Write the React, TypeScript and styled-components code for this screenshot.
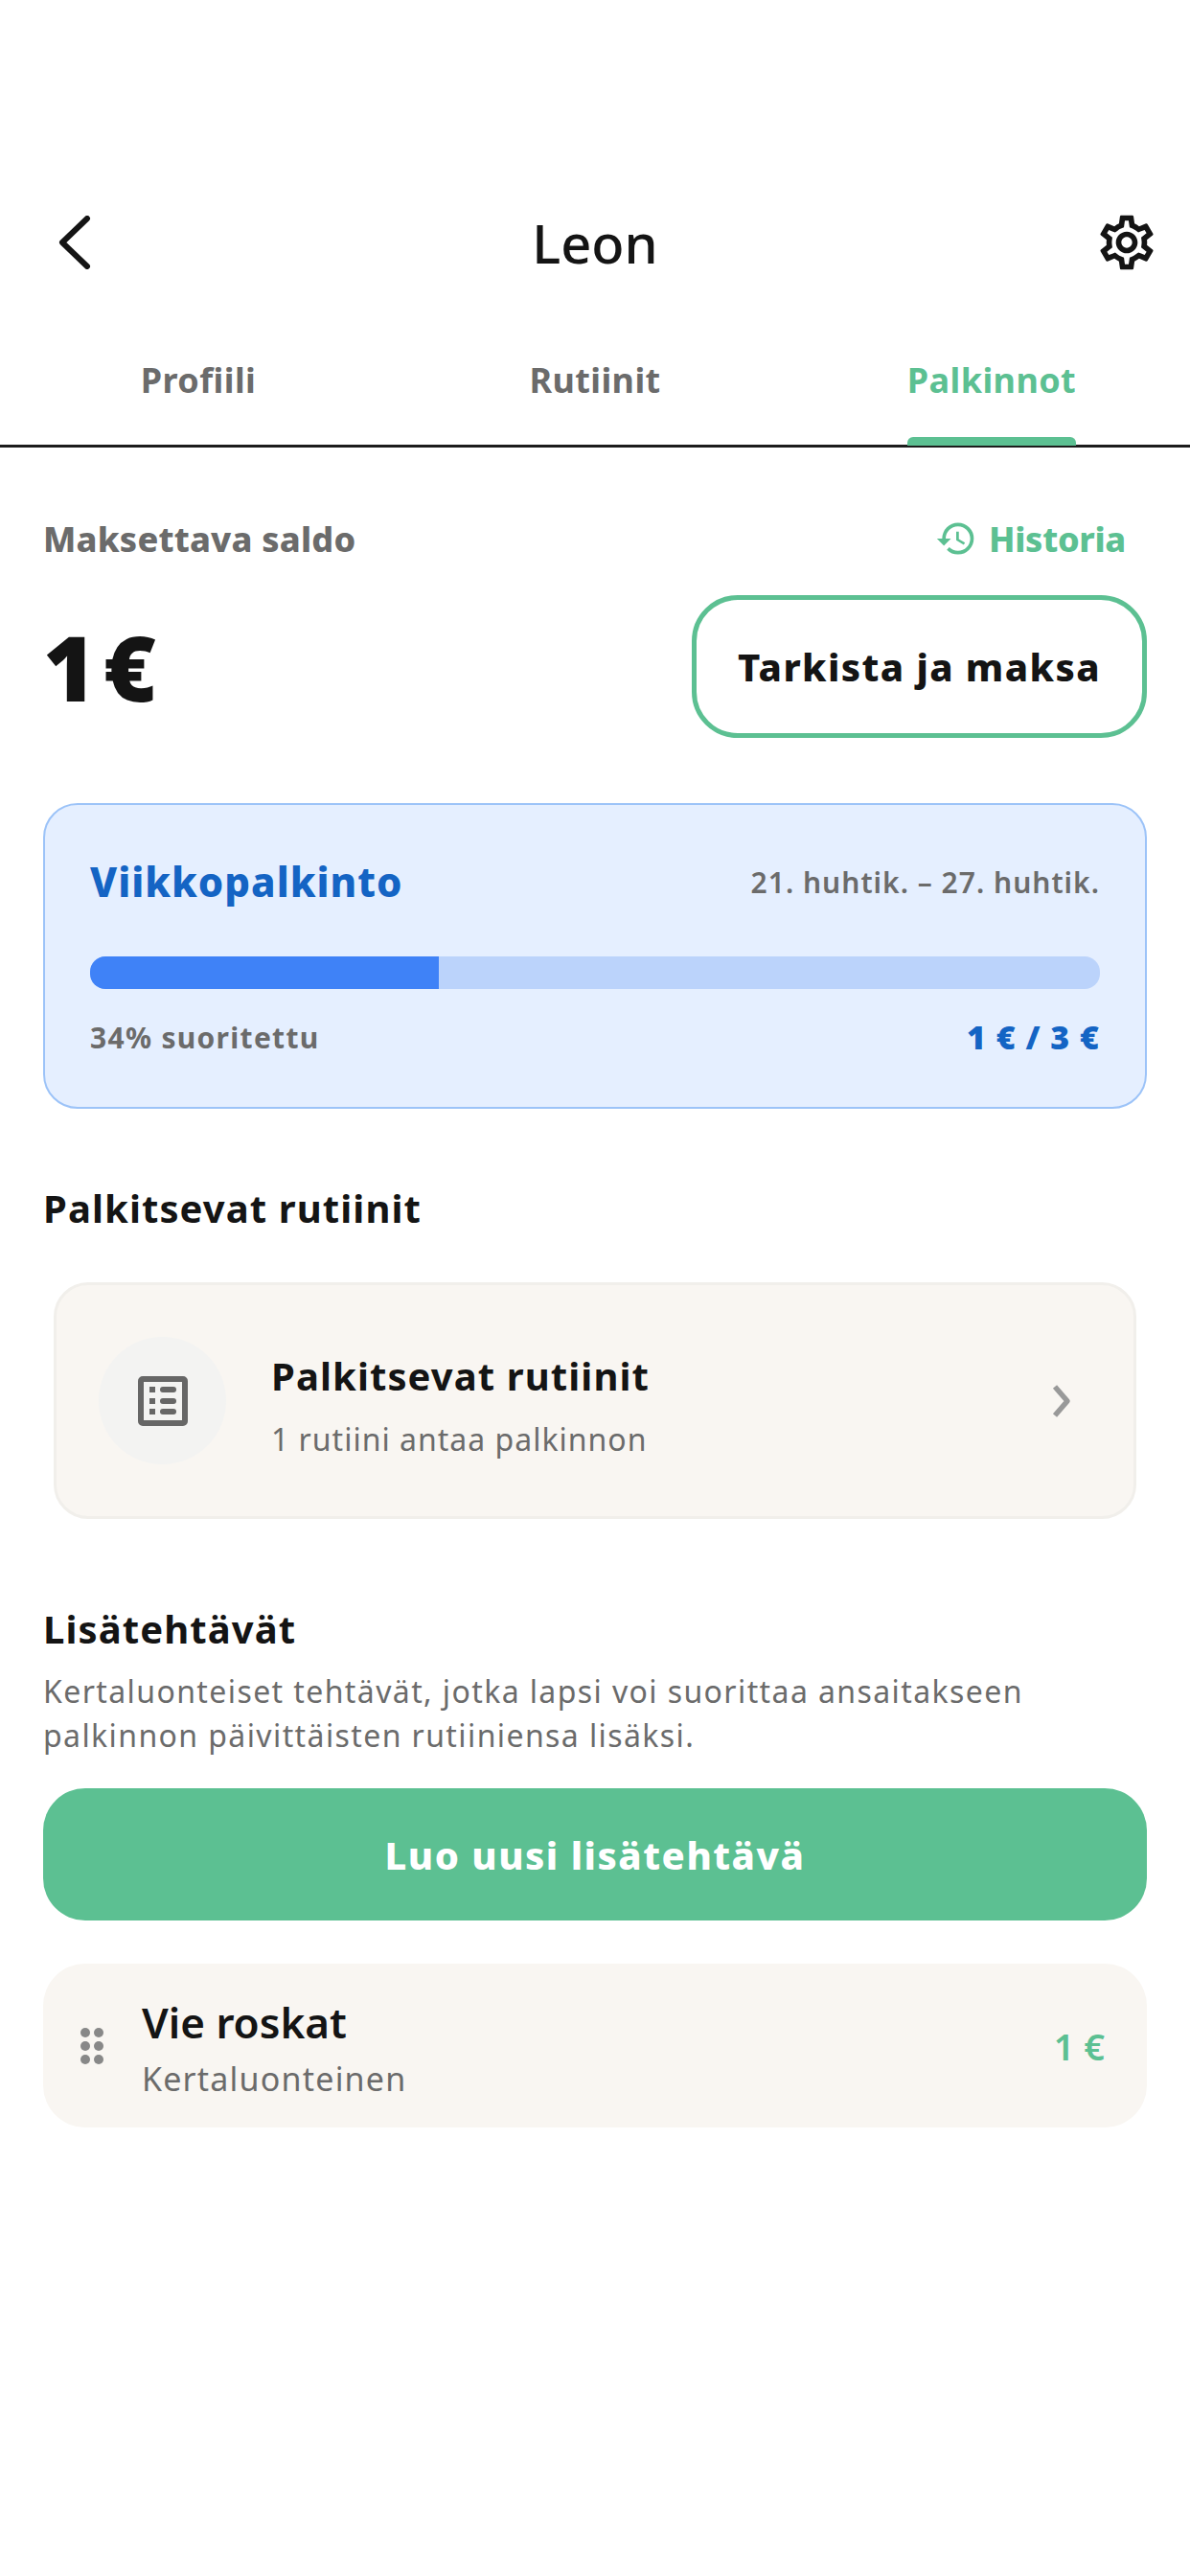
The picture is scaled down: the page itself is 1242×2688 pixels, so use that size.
import React from "react"
import styled, { createGlobalStyle } from "styled-components"
import { MdHistory, MdOutlineSettings } from "react-icons/md"

const green = "#5cc092"
const ink = "#141414"
const gray = "#6b6b6b"
const blue = "#1464c4"
const sand = "#f9f6f2"

const GlobalStyles = createGlobalStyle`
  html, body {
    margin: 0;
    padding: 0;
    background: #fff;
  }
  * {
    box-sizing: border-box;
  }
  body {
    font-family: "Noto Sans", "Open Sans", sans-serif;
    color: ${ink};
  }
`

const Page = styled.div`
  width: 1242px;
  height: 2688px;
  padding-top: 200px;
  background: #fff;
  overflow: hidden;
`

const Header = styled.header`
  height: 106px;
  padding: 0 32px;
  display: grid;
  grid-template-columns: 1fr auto 1fr;
  align-items: center;

  & > svg:first-child {
    margin-left: 28px;
  }

  & > svg:last-child {
    justify-self: end;
  }
`

const Title = styled.h1`
  margin: 0;
  font-size: 56px;
  font-weight: 500;
`

const TabBar = styled.nav`
  height: 161px;
  display: grid;
  grid-template-columns: repeat(3, 1fr);
  border-bottom: 3px solid #1c1c1c;
`

const Tab = styled.div`
  display: flex;
  justify-content: center;
`

const TabLabel = styled.span<{ $active?: boolean }>`
  position: relative;
  height: 158px;
  padding-top: 61px;
  font-size: 36px;
  line-height: 60px;
  font-weight: 700;
  letter-spacing: 0.4px;
  color: ${(p) => (p.$active ? green : gray)};

  &::after {
    content: "";
    display: ${(p) => (p.$active ? "block" : "none")};
    position: absolute;
    left: 0;
    right: 0;
    bottom: -1px;
    height: 9px;
    border-radius: 6px 6px 0 0;
    background: ${green};
  }
`

const Content = styled.main`
  padding: 0 45px;
`

const SaldoRow = styled.div`
  margin-top: 67px;
  height: 56px;
  padding-right: 22px;
  display: flex;
  align-items: center;
  justify-content: space-between;
`

const SaldoLabel = styled.span`
  font-size: 36px;
  font-weight: 800;
  letter-spacing: 0.2px;
  color: ${gray};
`

const HistoryLink = styled.span`
  display: flex;
  align-items: center;
  gap: 12px;
  font-size: 36px;
  font-weight: 800;
  letter-spacing: -0.3px;
  color: ${green};
`

const BalanceRow = styled.div`
  margin-top: 31px;
  display: flex;
  align-items: center;
  justify-content: space-between;
`

const Balance = styled.div`
  font-size: 94px;
  font-weight: 900;
  line-height: 1;
  letter-spacing: 8px;
`

const OutlineButton = styled.div`
  width: 475px;
  height: 149px;
  display: flex;
  align-items: center;
  justify-content: center;
  border: 5px solid ${green};
  border-radius: 48px;
  font-size: 40px;
  font-weight: 800;
  letter-spacing: 1.4px;
`

const WeeklyCard = styled.section`
  margin-top: 68px;
  height: 319px;
  padding: 50px 47px 0;
  background: #e5efff;
  border: 2.5px solid #9cc3f8;
  border-radius: 36px;
`

const SpacedRow = styled.div`
  display: flex;
  align-items: center;
  justify-content: space-between;
`

const WeeklyTitle = styled.span`
  font-size: 42px;
  font-weight: 800;
  line-height: 60px;
  letter-spacing: 1px;
  color: ${blue};
`

const DateRange = styled.span`
  font-size: 30px;
  font-weight: 600;
  letter-spacing: 1px;
  color: ${gray};
`

const Track = styled.div`
  margin-top: 48px;
  height: 34px;
  border-radius: 16px;
  background: #bbd3fb;
  overflow: hidden;
`

const Fill = styled.div`
  height: 100%;
  background: #3f82f7;
`

const ProgressRow = styled(SpacedRow)`
  margin-top: 27px;
`

const ProgressText = styled.span`
  font-size: 30px;
  font-weight: 700;
  letter-spacing: 1.3px;
  color: ${gray};
`

const ProgressAmount = styled.span`
  font-size: 34px;
  font-weight: 900;
  letter-spacing: 1px;
  color: ${blue};
`

const SectionTitle = styled.h2`
  margin: 74px 0 0;
  font-size: 40px;
  line-height: 60px;
  font-weight: 700;
  letter-spacing: 1.1px;
`

const RoutineCard = styled.div`
  margin: 47px 11px 0;
  height: 247px;
  padding: 0 64px 0 44px;
  display: flex;
  align-items: center;
  background: ${sand};
  border: 3px solid #f1efeb;
  border-radius: 36px;
`

const IconCircle = styled.div`
  width: 133px;
  height: 133px;
  flex-shrink: 0;
  border-radius: 50%;
  background: #f3f3f2;
  display: flex;
  align-items: center;
  justify-content: center;
`

const RoutineText = styled.div`
  margin-left: 47px;
  padding-top: 8px;
  flex: 1;
`

const RoutineTitle = styled.div`
  font-size: 40px;
  line-height: 56px;
  font-weight: 700;
  letter-spacing: 1.1px;
`

const RoutineSub = styled.div`
  margin-top: 16px;
  font-size: 32px;
  line-height: 44px;
  letter-spacing: 1px;
  color: ${gray};
`

const ExtraTitle = styled(SectionTitle)`
  margin-top: 85px;
`

const Description = styled.p`
  margin: 12px 0 0;
  font-size: 32px;
  line-height: 46px;
  letter-spacing: 1.4px;
  color: ${gray};
`

const PrimaryButton = styled.div`
  margin-top: 32px;
  height: 138px;
  display: flex;
  align-items: center;
  justify-content: center;
  background: ${green};
  border-radius: 44px;
  color: #fff;
  font-size: 40px;
  font-weight: 800;
  letter-spacing: 1.5px;
`

const TaskRow = styled.div`
  margin-top: 45px;
  height: 171px;
  padding: 0 44px 0 39px;
  display: flex;
  align-items: center;
  background: ${sand};
  border-radius: 44px;
`

const TaskText = styled.div`
  margin-left: 40px;
  padding-top: 2px;
  flex: 1;
`

const TaskTitle = styled.div`
  font-size: 44px;
  line-height: 60px;
  font-weight: 600;
`

const TaskSub = styled.div`
  margin-top: 6px;
  font-size: 34px;
  line-height: 46px;
  letter-spacing: 1.2px;
  color: ${gray};
`

const TaskAmount = styled.span`
  font-size: 38px;
  font-weight: 600;
  color: ${green};
`

const BackIcon = () => (
  <svg width="36" height="56" viewBox="0 0 36 56" fill="none">
    <path d="M31 3 L5 28 L31 53" stroke={ink} strokeWidth="6" strokeLinecap="round" strokeLinejoin="round" />
  </svg>
)

const ListIcon = () => (
  <svg width="52" height="52" viewBox="0 0 52 52" fill="none">
    <rect x="3" y="3" width="46" height="46" rx="2" stroke="#666" strokeWidth="6" />
    {[14, 26, 37].map((y) => (
      <g key={y} fill="#666">
        <rect x="12" y={y - 3} width="6" height="6" />
        <rect x="23" y={y - 3} width="17" height="6" rx="3" />
      </g>
    ))}
  </svg>
)

const ChevronIcon = () => (
  <svg width="22" height="36" viewBox="0 0 22 36" fill="none">
    <path d="M4 3 L17 18 L4 33" stroke="#999" strokeWidth="5.5" strokeLinejoin="round" />
  </svg>
)

const DragIcon = () => (
  <svg width="24" height="38" viewBox="0 0 24 38" fill="#888">
    {[5, 19, 33].map((y) => (
      <g key={y}>
        <circle cx="5" cy={y} r="5" />
        <circle cx="19" cy={y} r="5" />
      </g>
    ))}
  </svg>
)

const App = () => (
  <Page>
    <GlobalStyles />
    <Header>
      <BackIcon />
      <Title>Leon</Title>
      <MdOutlineSettings size={68} color={ink} />
    </Header>
    <TabBar>
      <Tab>
        <TabLabel>Profiili</TabLabel>
      </Tab>
      <Tab>
        <TabLabel>Rutiinit</TabLabel>
      </Tab>
      <Tab>
        <TabLabel $active>Palkinnot</TabLabel>
      </Tab>
    </TabBar>
    <Content>
      <SaldoRow>
        <SaldoLabel>Maksettava saldo</SaldoLabel>
        <HistoryLink>
          <MdHistory size={44} />
          Historia
        </HistoryLink>
      </SaldoRow>
      <BalanceRow>
        <Balance>1€</Balance>
        <OutlineButton>Tarkista ja maksa</OutlineButton>
      </BalanceRow>
      <WeeklyCard>
        <SpacedRow>
          <WeeklyTitle>Viikkopalkinto</WeeklyTitle>
          <DateRange>21. huhtik. – 27. huhtik.</DateRange>
        </SpacedRow>
        <Track>
          <Fill style={{ width: "34.5%" }} />
        </Track>
        <ProgressRow>
          <ProgressText>34% suoritettu</ProgressText>
          <ProgressAmount>1 € / 3 €</ProgressAmount>
        </ProgressRow>
      </WeeklyCard>
      <SectionTitle>Palkitsevat rutiinit</SectionTitle>
      <RoutineCard>
        <IconCircle>
          <ListIcon />
        </IconCircle>
        <RoutineText>
          <RoutineTitle>Palkitsevat rutiinit</RoutineTitle>
          <RoutineSub>1 rutiini antaa palkinnon</RoutineSub>
        </RoutineText>
        <ChevronIcon />
      </RoutineCard>
      <ExtraTitle>Lisätehtävät</ExtraTitle>
      <Description>
        Kertaluonteiset tehtävät, jotka lapsi voi suorittaa ansaitakseen
        <br />
        palkinnon päivittäisten rutiiniensa lisäksi.
      </Description>
      <PrimaryButton>Luo uusi lisätehtävä</PrimaryButton>
      <TaskRow>
        <DragIcon />
        <TaskText>
          <TaskTitle>Vie roskat</TaskTitle>
          <TaskSub>Kertaluonteinen</TaskSub>
        </TaskText>
        <TaskAmount>1 €</TaskAmount>
      </TaskRow>
    </Content>
  </Page>
)

export default App
